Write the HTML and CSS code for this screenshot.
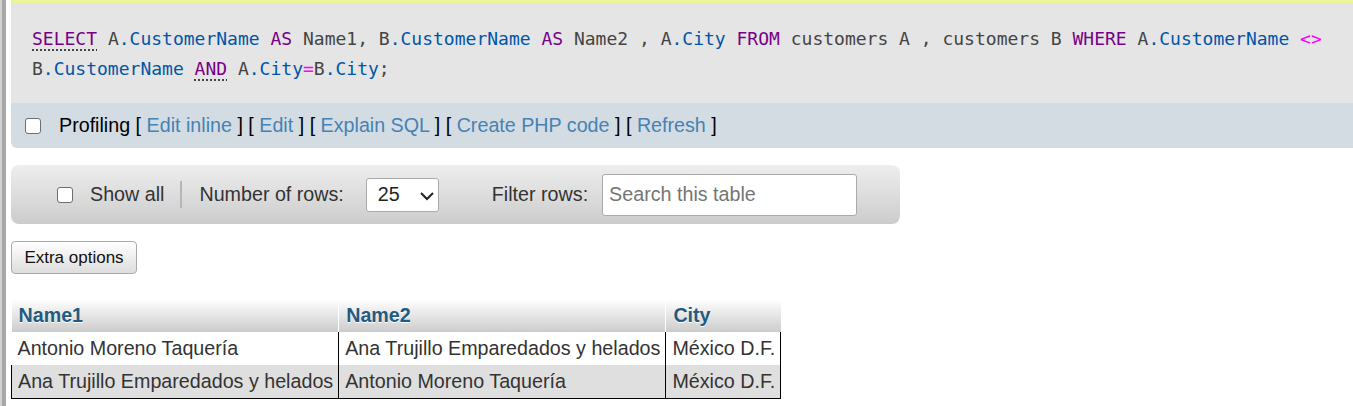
FILE: index.html
```html
<!DOCTYPE html>
<html>
<head>
<meta charset="utf-8">
<link rel="stylesheet" href="styles.css">
</head>
<body>
<div class="main">
  <div class="sql"><code><span class="kw dotted">SELECT</span> <span class="al">A</span><span class="col">.CustomerName</span> <span class="kw">AS</span> Name1, <span class="al">B</span><span class="col">.CustomerName</span> <span class="kw">AS</span> Name2 , <span class="al">A</span><span class="col">.City</span> <span class="kw">FROM</span> customers A , customers B <span class="kw">WHERE</span> <span class="al">A</span><span class="col">.CustomerName</span> <span class="op">&lt;&gt;</span><br><span class="al">B</span><span class="col">.CustomerName</span> <span class="kw dotted">AND</span> <span class="al">A</span><span class="col">.City</span><span class="op">=</span><span class="al">B</span><span class="col">.City</span>;</code></div>
  <div class="profiling">
    <input type="checkbox" class="cb">
    <span class="plabel">Profiling [ <a>Edit inline</a> ] [ <a>Edit</a> ] [ <a>Explain SQL</a> ] [ <a>Create PHP code</a> ] [ <a>Refresh</a> ]</span>
  </div>
  <div class="toolbar">
    <input type="checkbox" class="cb">
    <span class="tlabel showall">Show all</span>
    <span class="sep"></span>
    <span class="tlabel">Number of rows:</span>
    <span class="select">25<svg class="chev" width="16" height="10" viewBox="0 0 16 10"><path d="M2 2 L8 8 L14 2" fill="none" stroke="#222" stroke-width="2"/></svg></span>
    <span class="tlabel filter">Filter rows:</span>
    <input class="search" type="text" placeholder="Search this table">
  </div>
  <button class="extra">Extra options</button>
  <table class="data">
    <thead>
      <tr><th>Name1</th><th>Name2</th><th>City</th></tr>
    </thead>
    <tbody>
      <tr class="odd"><td>Antonio Moreno Taquería</td><td>Ana Trujillo Emparedados y helados</td><td>México D.F.</td></tr>
      <tr class="even"><td>Ana Trujillo Emparedados y helados</td><td>Antonio Moreno Taquería</td><td>México D.F.</td></tr>
    </tbody>
  </table>
</div>
</body>
</html>
```
FILE: styles.css
```css
html, body {
  margin: 0;
  padding: 0;
}
body {
  height: 406px;
  background: linear-gradient(to right, #d2d2d2 0 2px, #a8a8a8 2px 6px, #ffffff 6px);
  font-family: Arial, "Liberation Sans", sans-serif;
  font-size: 19.7px;
  color: #333;
}
.main {
  margin-left: 11px;
}
.sql {
  background: #e5e5e5;
  border-top: 3px solid #ebf59c;
  padding: 21px 10px 19px 21px;
  font-family: "DejaVu Sans Mono", "Liberation Mono", monospace;
  font-size: 18px;
  line-height: 30px;
  color: #444;
}
.sql code {
  font-family: inherit;
}
.kw { color: #770088; }
.col { color: #0055aa; }
.al { color: #444; }
.op { color: #ff00ff; }
.dotted {
  text-decoration: underline dotted #333;
  text-underline-offset: 5px;
}
.profiling {
  background: #d3dce3;
  height: 45px;
  display: flex;
  align-items: center;
  padding-left: 14px;
  border-radius: 0 0 0 6px;
}
.cb {
  appearance: none;
  -webkit-appearance: none;
  width: 16px;
  height: 16px;
  margin: 0;
  border: 1.5px solid #6e6e6e;
  border-radius: 3px;
  background: #fff;
  box-sizing: border-box;
  flex: none;
}
.plabel {
  margin-left: 18px;
  color: #000;
}
.plabel a {
  color: #4682b4;
}
.toolbar {
  margin-top: 17px;
  width: 889px;
  height: 59px;
  box-sizing: border-box;
  border-radius: 8px;
  background: linear-gradient(#eeeeee, #cccccc);
  display: flex;
  align-items: center;
  padding-left: 46px;
}
.tlabel {
  color: #333;
}
.showall {
  margin-left: 17px;
}
.sep {
  width: 2px;
  height: 27px;
  background: #b9b5b1;
  margin: 0 17px 0 16px;
  align-self: center;
}
.select {
  margin-left: 22px;
  width: 73px;
  height: 34px;
  box-sizing: border-box;
  background: #fff;
  border: 1px solid #aaa;
  border-radius: 3px;
  display: flex;
  align-items: center;
  padding-left: 11px;
  color: #222;
  position: relative;
}
.chev {
  position: absolute;
  left: 52px;
  top: 12px;
}
.filter {
  margin-left: 53px;
}
.search {
  margin-left: 14px;
  width: 255px;
  height: 42px;
  box-sizing: border-box;
  border: 1px solid #aaa;
  border-radius: 3px;
  padding: 0 6px;
  font-family: Arial, "Liberation Sans", sans-serif;
  font-size: 19.7px;
  color: #333;
  background: #fff;
}
.search::placeholder {
  color: #757575;
}
.extra {
  display: block;
  margin-top: 17px;
  width: 126px;
  height: 33px;
  border: 1px solid #aaa;
  border-radius: 4px;
  background: linear-gradient(#ffffff, #dddddd);
  font-family: Arial, "Liberation Sans", sans-serif;
  font-size: 17px;
  color: #111;
  padding: 0;
}
.data {
  margin-top: 25px;
  border-collapse: collapse;
  font-size: 19.7px;
}
.data th {
  text-align: left;
  font-weight: bold;
  color: #235a81;
  text-shadow: 0 1px 0 #fff;
  background: linear-gradient(#ffffff, #cccccc);
  padding: 4px 6px 4px 7px;
  height: 25px;
  border-right: 1px solid #fff;
  line-height: 25px;
}
.data th:last-child {
  border-right: none;
}
.data td {
  padding: 4px 5px 4px 6px;
  line-height: 25px;
  height: 25px;
  color: #333;
  white-space: nowrap;
  border-right: 1px solid #000;
}
.data tr.odd td {
  background: #fff;
}
.data tr.even td {
  background: #dfdfdf;
  border-bottom: 1px solid #000;
}
.data tr.even td:first-child {
  border-left: 1px solid #000;
}
```
